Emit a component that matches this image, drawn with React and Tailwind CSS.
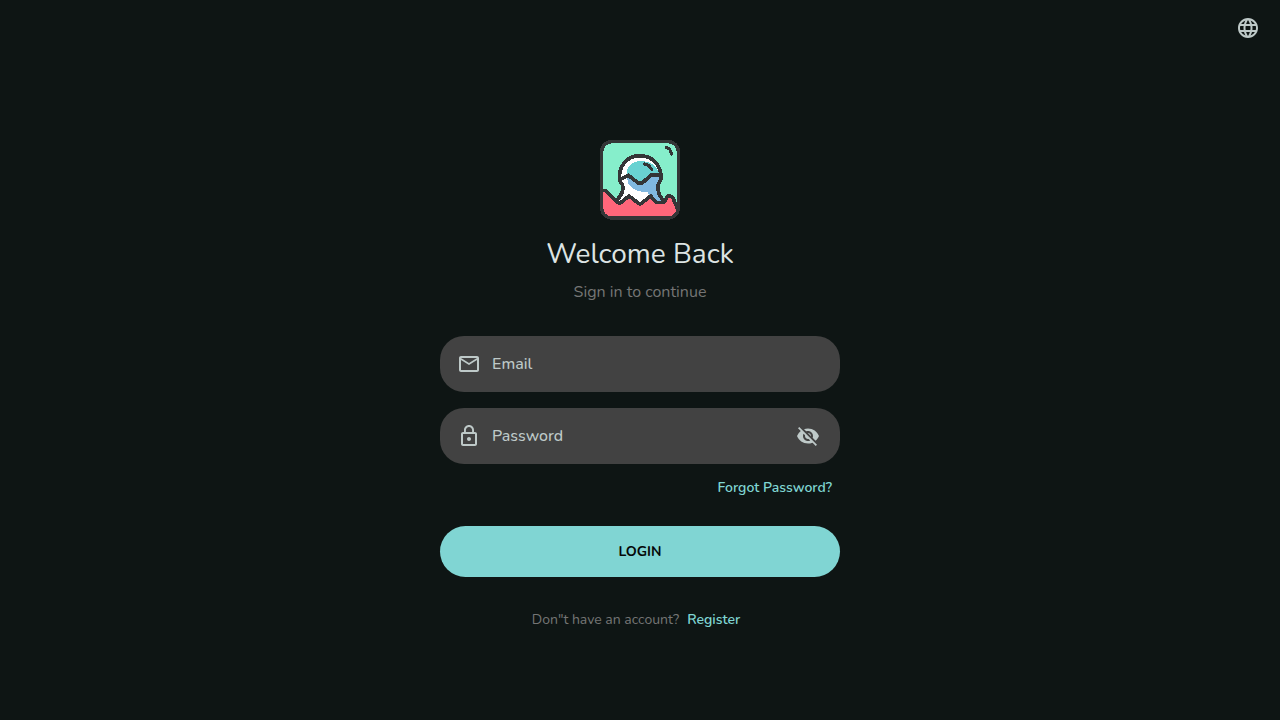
import { useState } from "react";
import { MdLanguage, MdMailOutline, MdLockOutline, MdVisibility, MdVisibilityOff } from "react-icons/md";

function Logo() {
  return (
    <svg className="size-20" viewBox="0 0 240 240" shapeRendering="crispEdges" role="img" aria-label="Logo">
      <defs>
        <clipPath id="tile">
          <rect x="4" y="4" width="232" height="231" rx="32" />
        </clipPath>
      </defs>
      <g clipPath="url(#tile)">
        <rect width="240" height="240" fill="#86eecb" />
        <path
          d="M59 121C54 78 82 47 119 47C157 47 186 76 183 115C176 124 171 130 172 139C173 160 180 174 196 184L188 198L120 202L60 192L50 178C68 160 70 150 67 137C66 130 61 126 59 121Z"
          fill="#ffffff"
        />
        <path d="M80 108C77 80 96 63 121 63C148 61 170 78 179 101L156 107L140 122L120 129L104 122L92 112Z" fill="#69d2d2" />
        <path
          d="M80 112L92 112L108 124L122 130L138 124L154 106H182C184 116 171 128 172 140C173 160 180 174 196 184L188 198L170 188L150 168L142 155C112 160 83 144 80 112Z"
          fill="#80b8e0"
        />
        <path d="M0 150H14L22 153L57 188L69 184L88 168L120 192L152 168L168 186L190 185L206 168L217 172L232 208V240H0Z" fill="#ff667a" />
        <g fill="none" stroke="#343537" strokeWidth="11" strokeLinejoin="round" strokeLinecap="round">
          <path d="M8 151H15L56 189H61L87 168L117 191H123L152 168L168 187H190L204 168H211L219 174L233 208" />
          <path d="M52 179C68 161 72 149 68 136C65 130 60 126 59 120C54 78 82 47 119 47C157 47 186 76 183 118C176 128 173 132 174 143C174 162 181 174 195 184" />
          <path d="M61 118L85 106L115 129H127L153 105H182" />
          <path d="M133 72L146 76L155 88" strokeWidth="9" />
          <path d="M199 22L209 28L215 42" strokeWidth="9" />
        </g>
      </g>
      <rect x="5" y="5" width="230" height="229" rx="30" fill="none" stroke="#343537" strokeWidth="10" />
    </svg>
  );
}

function Field({ id, label, type, icon: Icon, children }) {
  return (
    <div className="flex h-14 items-center rounded-3xl bg-[#424242] pr-5 pl-[17px] text-[#bec9c8]">
      <label htmlFor={id} className="shrink-0">
        <Icon className="size-6" role="img" aria-label={label} />
      </label>
      <input
        id={id}
        type={type}
        placeholder={label}
        className="ml-[11px] h-8 min-w-0 flex-1 bg-transparent text-base outline-none placeholder:font-medium placeholder:text-[#bec9c8]"
      />
      {children}
    </div>
  );
}

export default function App() {
  const [visible, setVisible] = useState(false);
  const EyeIcon = visible ? MdVisibility : MdVisibilityOff;

  return (
    <div className="flex min-h-screen flex-col bg-[#0e1514] font-['Nunito','Open_Sans',sans-serif]">
      <header className="flex h-14 items-center justify-end px-2">
        <button type="button" aria-label="Change language" className="flex size-12 items-center justify-center text-[#bec9c8]">
          <MdLanguage className="size-6" />
        </button>
      </header>
      <main className="flex flex-1 flex-col items-center justify-center px-6">
        <form className="flex w-full max-w-[400px] flex-col" onSubmit={(e) => e.preventDefault()}>
          <div className="flex justify-center">
            <Logo />
          </div>
          <h1 className="mt-4 text-center text-[28px] leading-9 text-[#dde4e3]">Welcome Back</h1>
          <p className="mt-2 text-center text-base text-[#757575]">Sign in to continue</p>
          <div className="mt-8 flex flex-col gap-4">
            <Field id="email" label="Email" type="email" icon={MdMailOutline} />
            <Field id="password" label="Password" type={visible ? "text" : "password"} icon={MdLockOutline}>
              <button type="button" aria-label="Toggle password visibility" onClick={() => setVisible(!visible)}>
                <EyeIcon className="size-6" />
              </button>
            </Field>
          </div>
          <div className="mt-2 flex justify-end px-2">
            <a href="#forgot" className="text-sm leading-8 font-semibold text-[#80d5d3]">
              Forgot Password?
            </a>
          </div>
          <button type="submit" className="mt-[22px] h-[51px] rounded-full bg-[#80d5d3] text-sm font-bold text-[#050808]">
            LOGIN
          </button>
          <div className="mt-[27px] flex items-center justify-center text-sm leading-8">
            <span className="text-[#757575]">Don"t have an account?</span>
            <a href="#register" className="px-2 font-semibold text-[#80d5d3]">
              Register
            </a>
          </div>
        </form>
      </main>
    </div>
  );
}
